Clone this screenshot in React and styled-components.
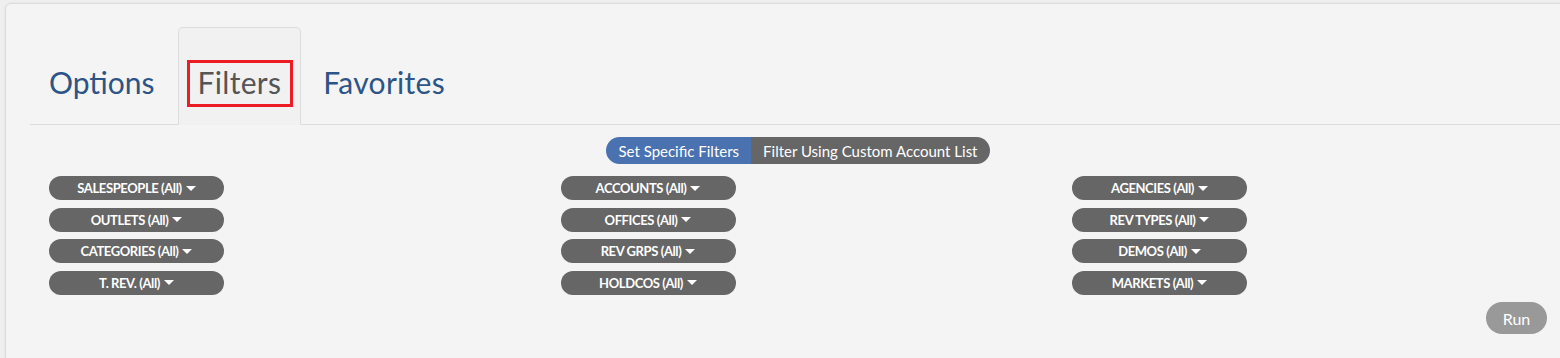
import React from "react";
import styled, { createGlobalStyle } from "styled-components";

const Global = createGlobalStyle`
  html, body { margin: 0; padding: 0; background: #efefef; overflow: hidden; }
  body { font-family: Lato, "Open Sans", Arial, sans-serif; }
`;

const Page = styled.div`
  padding: 3px 0 0 5px;
  width: 1600px;
`;

const Card = styled.div`
  background: #f4f4f4;
  border: 1px solid #dcdcdc;
  border-radius: 6px;
  box-shadow: 0 0 3px rgba(0, 0, 0, 0.06);
  padding: 23px 0 0 24px;
  height: 360px;
  box-sizing: border-box;
`;

const Inner = styled.div`
  width: 1535px;
`;

const TabList = styled.div`
  display: flex;
  align-items: flex-end;
  border-bottom: 1px solid #dcdcdc;
`;

const Tab = styled.div`
  box-sizing: border-box;
  height: 98px;
  margin: 0 ${(p) => p.$mr || 0}px -1px 0;
  padding: 0 ${(p) => p.$pr}px 24px ${(p) => p.$pl}px;
  display: flex;
  align-items: flex-end;
  font-size: 30px;
  line-height: 36px;
  letter-spacing: ${(p) => p.$ls || 0}px;
  color: ${(p) => (p.$active ? "#555555" : "#2d5486")};
  border: 1px solid ${(p) => (p.$active ? "#dcdcdc" : "transparent")};
  border-bottom-color: ${(p) => (p.$active ? "#f1f1f1" : "transparent")};
  border-radius: 5px 5px 0 0;
  background: ${(p) => (p.$active ? "#f1f1f1" : "transparent")};
`;

const Highlight = styled.span`
  display: inline-block;
  border: 3px solid #ed1c24;
  padding: 1px 9px 4px 8px;
  margin: 0 -12px -7px -11px;
`;

const ToggleRow = styled.div`
  display: flex;
  justify-content: center;
  margin-top: 12px;
  padding-left: 1px;
`;

const Toggle = styled.div`
  display: flex;
  border-radius: 14px;
  overflow: hidden;
  height: 27px;
`;

const ToggleOption = styled.div`
  display: flex;
  align-items: center;
  padding: 0 12px;
  font-size: 15px;
  color: #ffffff;
  background: ${(p) => (p.$active ? "#4a72b0" : "#666666")};
`;

const Grid = styled.div`
  display: grid;
  grid-template-columns: repeat(3, 511.5px);
  margin-top: 12px;
  padding-left: 19px;
`;

const Column = styled.div`
  display: flex;
  flex-direction: column;
  gap: 7px;
`;

const Pill = styled.button`
  width: 175px;
  height: 24px;
  border: none;
  border-radius: 12px;
  background: #666666;
  color: #ffffff;
  font-family: Lato, Arial, sans-serif;
  font-weight: 700;
  font-size: 13px;
  letter-spacing: -0.4px;
  display: flex;
  align-items: center;
  justify-content: center;
  padding: 0;
  margin-bottom: 0.5px;
`;

const Caret = styled.span`
  display: inline-block;
  width: 0;
  height: 0;
  margin-left: 4px;
  border-left: 5px solid transparent;
  border-right: 5px solid transparent;
  border-top: 5px solid #ffffff;
`;

const Footer = styled.div`
  width: 1517px;
  display: flex;
  justify-content: flex-end;
  margin-top: 7px;
`;

const RunButton = styled.button`
  width: 61px;
  height: 32px;
  border: none;
  border-radius: 16px;
  background: #999999;
  color: #ffffff;
  font-family: Lato, Arial, sans-serif;
  font-size: 16px;
  padding: 0;
`;

const columns = [
  ["SALESPEOPLE", "OUTLETS", "CATEGORIES", "T. REV."],
  ["ACCOUNTS", "OFFICES", "REV GRPS", "HOLDCOS"],
  ["AGENCIES", "REV TYPES", "DEMOS", "MARKETS"],
];

export default function App() {
  return (
    <>
      <Global />
      <Page>
        <Card>
          <Inner>
            <TabList>
              <Tab $pl={18} $pr={20} $mr={2}>Options</Tab>
              <Tab $active $pl={19} $pr={19} $mr={2} $ls={0.3}>
                <Highlight>Filters</Highlight>
              </Tab>
              <Tab $pl={19} $pr={20} $ls={0.3}>Favorites</Tab>
            </TabList>
            <ToggleRow>
              <Toggle>
                <ToggleOption $active>Set Specific Filters</ToggleOption>
                <ToggleOption>Filter Using Custom Account List</ToggleOption>
              </Toggle>
            </ToggleRow>
            <Grid>
              {columns.map((col, i) => (
                <Column key={i}>
                  {col.map((name) => (
                    <Pill key={name}>
                      {name} (All)
                      <Caret />
                    </Pill>
                  ))}
                </Column>
              ))}
            </Grid>
          </Inner>
          <Footer>
            <RunButton>Run</RunButton>
          </Footer>
        </Card>
      </Page>
    </>
  );
}
